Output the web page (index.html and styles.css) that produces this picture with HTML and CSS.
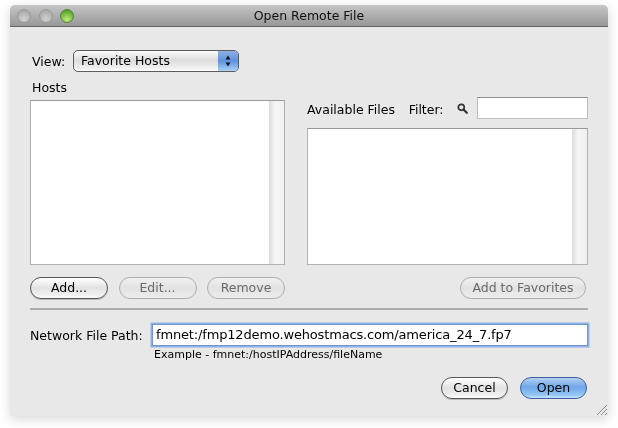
FILE: index.html
```html
<!DOCTYPE html>
<html lang="en">
<head>
<meta charset="utf-8">
<title>Open Remote File</title>
<link rel="stylesheet" href="styles.css">
</head>
<body>
<div class="window">
  <header class="titlebar">
    <div class="lights">
      <span class="light"></span>
      <span class="light"></span>
      <span class="light light-green"></span>
    </div>
    <div class="title">Open Remote File</div>
  </header>
  <main class="content">
    <div class="view-row">
      <span class="view-label">View:</span>
      <div class="select">
        <span class="select-value">Favorite Hosts</span>
        <span class="select-arrows">
          <svg width="8" height="14" viewBox="0 0 8 14"><path d="M4 1.500 6.500 5.500H1.500Z M4 12.500 1.500 8.500H6.500Z" fill="#10131c"/></svg>
        </span>
      </div>
    </div>
    <div class="panes">
      <section class="pane">
        <div class="pane-head">Hosts</div>
        <div class="list"><div class="scrolltrack"></div></div>
      </section>
      <section class="pane">
        <div class="pane-head pane-head-files">
          <span class="files-label">Available Files</span>
          <span class="filter-label">Filter:</span>
          <svg class="search" width="11" height="11" viewBox="0 0 11 11"><circle cx="4.300" cy="4.300" r="3" fill="none" stroke="#333" stroke-width="1.700"/><path d="M6.800 6.800 9.800 9.800" stroke="#333" stroke-width="2.200" stroke-linecap="round"/></svg>
          <div class="filter-input"></div>
        </div>
        <div class="list"><div class="scrolltrack"></div></div>
      </section>
    </div>
    <div class="button-row">
      <div class="button-group">
        <button class="btn btn-strong btn-wide">Add...</button>
        <button class="btn btn-off btn-wide">Edit...</button>
        <button class="btn btn-off btn-wide">Remove</button>
      </div>
      <button class="btn btn-off btn-favorites">Add to Favorites</button>
    </div>
    <div class="separator"></div>
    <div class="path-row">
      <span class="path-label">Network File Path:</span>
      <div class="path-input">fmnet:/fmp12demo.wehostmacs.com/america_24_7.fp7</div>
    </div>
    <div class="example">Example - fmnet:/hostIPAddress/fileName</div>
    <div class="footer">
      <button class="btn btn-strong btn-footer">Cancel</button>
      <button class="btn btn-default btn-footer">Open</button>
    </div>
  </main>
  <svg class="grip" width="12" height="12" viewBox="0 0 12 12"><path d="M1 11 11 1M5 11 11 5M9 11 11 9" stroke="#8a8a8a" stroke-width="1"/></svg>
</div>
</body>
</html>
```
FILE: styles.css
```css
* { box-sizing: border-box; }
html, body { margin: 0; padding: 0; background: #fff; }
body {
  width: 618px;
  height: 428px;
  overflow: hidden;
  font-family: "DejaVu Sans", "Liberation Sans", sans-serif;
  font-size: 12.5px;
  color: #000;
}
.window {
  position: relative;
  width: 598px;
  height: 411px;
  margin: 5px 0 0 10px;
  background: #e8e8e8;
  border-radius: 5px 5px 0 0;
  box-shadow: 0 3px 12px rgba(0, 0, 0, 0.16);
  filter: blur(0.35px);
}
.titlebar {
  position: relative;
  height: 22px;
  display: flex;
  align-items: center;
  justify-content: center;
  background: linear-gradient(#c6c6c6, #979797);
  border-bottom: 1px solid #626262;
  border-radius: 5px 5px 0 0;
}
.lights {
  position: absolute;
  left: 7px;
  top: 4px;
  display: flex;
  gap: 7.500px;
}
.light {
  width: 14px;
  height: 14px;
  border-radius: 50%;
  border: 1px solid #9a9a9a;
  background: radial-gradient(circle at 50% 75%, #d2d2d2, #adadad 70%);
}
.light-green {
  border-color: #4f8a2c;
  background: radial-gradient(circle at 50% 80%, #c4ee7c, #68b23a 65%, #4a8c28);
}
.title { color: #111; }
.content {
  padding: 0 20px;
  display: flex;
  flex-direction: column;
}
.view-row {
  margin-top: 23px;
  height: 22px;
  display: flex;
  align-items: center;
}
.view-label { margin-left: 2px; width: 41px; padding-top: 1px; }
.select {
  width: 166px;
  height: 22px;
  display: flex;
  border: 1px solid #5c5c5c;
  border-radius: 5px;
  overflow: hidden;
  background: linear-gradient(#fbfbfb, #dcdcdc 45%, #f2f2f2 90%, #fff);
}
.select-value { flex: 1; padding-left: 7px; line-height: 20px; }
.select-arrows {
  width: 20px;
  display: flex;
  align-items: center;
  justify-content: center;
  background: linear-gradient(#8fb0e2, #5d93de 50%, #a9d2f7);
}
.panes {
  margin-top: 8px;
  height: 185px;
  display: grid;
  grid-template-columns: 255px 281px;
  gap: 22px;
}
.pane { display: flex; flex-direction: column; min-height: 0; }
.pane-head {
  height: 20px;
  line-height: 16px;
  padding-left: 2px;
}
.pane-head-files {
  height: 48px;
  padding-left: 0;
  display: flex;
  align-items: flex-start;
  padding-top: 17px;
}
.files-label { margin-top: 5px; width: 102px; }
.filter-label { margin-top: 5px; width: 49px; }
.search { margin-top: 6px; margin-right: 9px; }
.filter-input {
  width: 111px;
  height: 22px;
  background: #fff;
  border: 1px solid #bdbdbd;
  border-top-color: #8f8f8f;
}
.list {
  flex: 1;
  display: flex;
  justify-content: flex-end;
  background: #fff;
  border: 1px solid #b0b0b0;
  border-top-color: #9a9a9a;
}
.scrolltrack {
  width: 15px;
  background: linear-gradient(90deg, #dcdcdc, #f6f6f6 40%, #f0f0f0);
}
.button-row {
  margin-top: 12px;
  padding-right: 2px;
  display: flex;
  justify-content: space-between;
}
.button-group { display: flex; gap: 10.500px; }
.btn {
  height: 22px;
  padding: 0 0 2px;
  font: inherit;
  border-radius: 11px;
  border: 1px solid #555;
  background: linear-gradient(#fff, #e2e2e2 50%, #f3f3f3 90%, #fff);
  color: #000;
}
.btn-wide { width: 78px; }
.btn-strong { box-shadow: 0 1px 0 #bbb; }
.btn-off {
  border-color: #adadad;
  color: #6a6a6a;
  background: linear-gradient(#f1f1f1, #e2e2e2 50%, #ececec);
}
.btn-favorites { width: 126px; }
.btn-footer { width: 67px; }
.btn-default {
  border-color: #3f5f9e;
  background: linear-gradient(#b5d0f1, #6ea6e8 45%, #93c7f6 85%, #c9e4fb);
}
.separator {
  margin-top: 9px;
  height: 2px;
  background: #acacac;
}
.path-row {
  margin-top: 14px;
  height: 22px;
  display: flex;
  align-items: center;
}
.path-label { width: 122px; }
.path-input {
  width: 436px;
  height: 22px;
  margin-right: -20px;
  padding-left: 3px;
  flex: none;
  font-size: 13px;
  line-height: 20px;
  letter-spacing: -0.160px;
  background: #fff;
  border: 1px solid #6f97cd;
  box-shadow: 0 0 0 1.500px #8db2e3;
  white-space: nowrap;
}
.example {
  margin: 1px 0 0 124px;
  height: 15px;
  line-height: 15px;
  font-size: 11px;
}
.footer {
  margin-top: 15px;
  padding-right: 1px;
  display: flex;
  justify-content: flex-end;
  gap: 12px;
}
.grip { position: absolute; right: 0; bottom: 0; }
```
